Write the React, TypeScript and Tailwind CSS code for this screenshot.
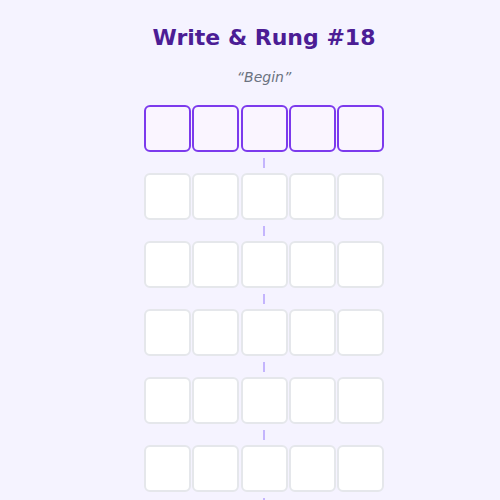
const ROWS = 6;
const COLS = 5;

const Tile = ({ active }: { active: boolean }) => (
  <div
    className={
      active
        ? "w-[47px] h-[47px] rounded-md border-2 border-[#7c3aed] bg-[#faf5ff]"
        : "w-[47px] h-[47px] rounded-md border-2 border-[#e5e7eb] bg-white"
    }
  />
);

export default function App() {
  return (
    <div
      className="w-[500px] h-[500px] overflow-hidden bg-[#f5f3ff] flex flex-col items-center pl-[28px]"
      style={{ fontFamily: '"DejaVu Sans", sans-serif' }}
    >
      <h1 className="mt-[24px] text-[22px] leading-[28px] font-bold text-[#4c1d95]">
        Write &amp; Rung #18
      </h1>
      <p className="mt-[16px] text-[14px] leading-[18px] italic text-[#6b7280]">“Begin”</p>
      <div className="mt-[19px] flex flex-col items-center">
        {Array.from({ length: ROWS }).map((_, r) => (
          <div key={r} className="flex flex-col items-center">
            <div className="flex gap-[1.25px]">
              {Array.from({ length: COLS }).map((_, c) => (
                <Tile key={c} active={r === 0} />
              ))}
            </div>
            <div className="w-[2px] h-[10px] mt-[6px] mb-[5px] bg-[#c4b5fd]" />
          </div>
        ))}
      </div>
    </div>
  );
}
